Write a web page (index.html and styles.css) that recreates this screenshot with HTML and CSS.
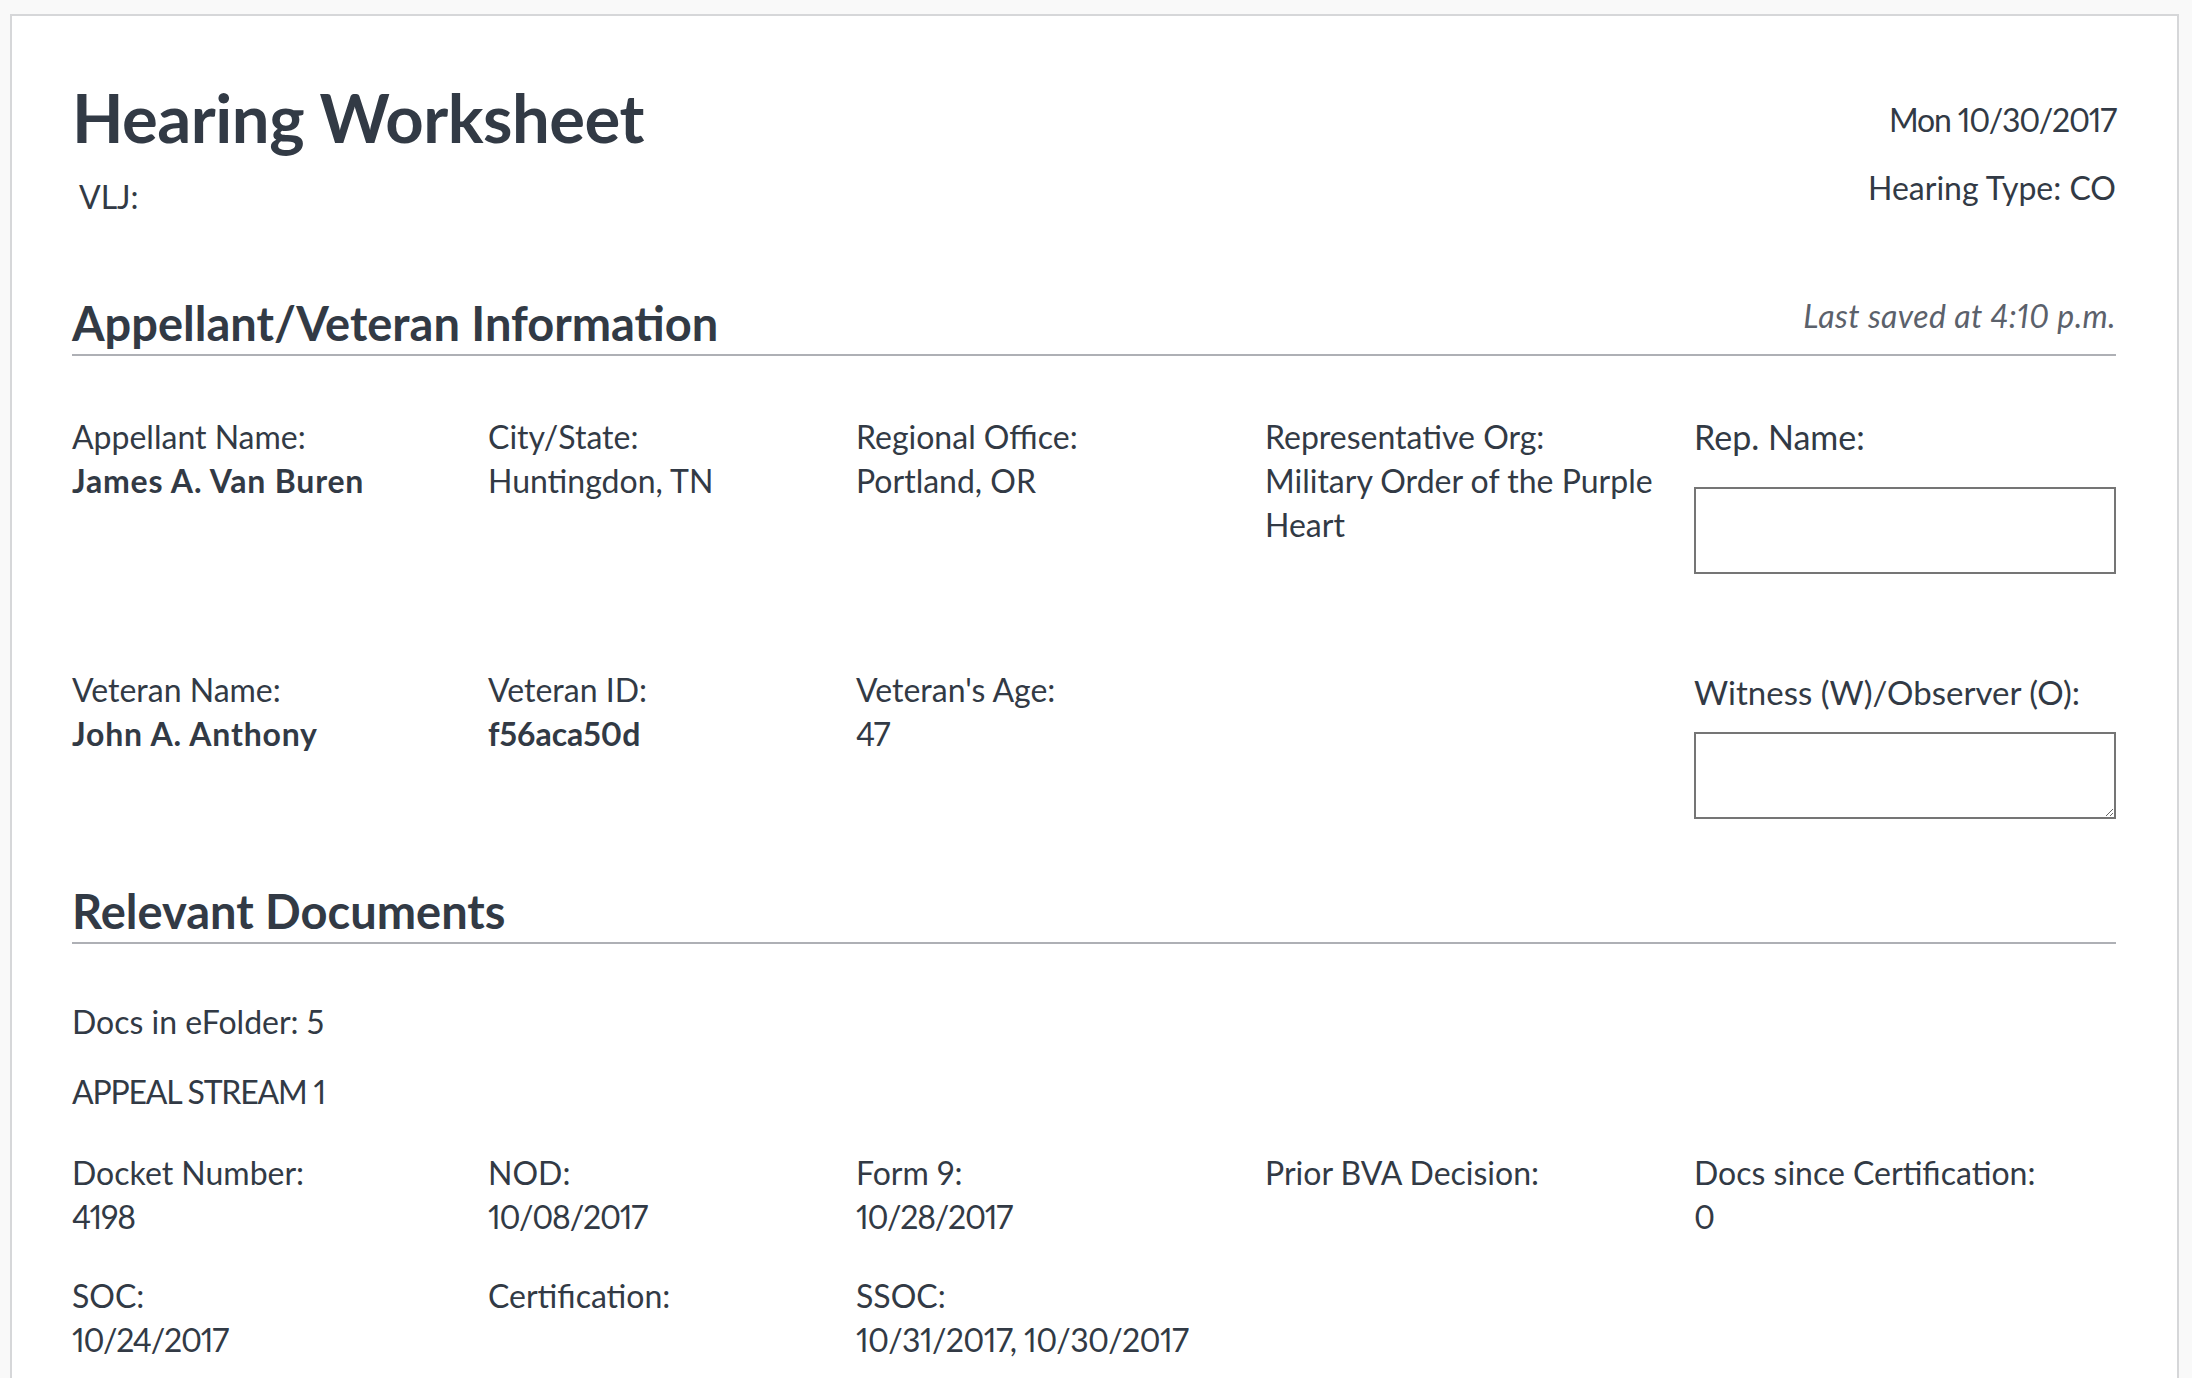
FILE: index.html
```html
<!DOCTYPE html>
<html lang="en">
<head>
<meta charset="utf-8">
<title>Hearing Worksheet</title>
<link rel="stylesheet" href="styles.css">
</head>
<body>
<div class="page">
  <main class="card">
    <header class="sheet-head">
      <div class="head-left">
        <h1 class="title">Hearing Worksheet</h1>
        <div class="vlj">VLJ:</div>
      </div>
      <div class="head-right">
        <div class="meta num">Mon 10/30/2017</div>
        <div class="meta meta-next">Hearing Type: CO</div>
      </div>
    </header>

    <section class="info">
      <div class="section-head">
        <h2 class="section-title">Appellant/Veteran Information</h2>
        <span class="saved">Last saved at 4:10 p.m.</span>
      </div>

      <div class="grid row-a">
        <div class="cell"><div class="line">Appellant Name:</div><div class="line strong">James A. Van Buren</div></div>
        <div class="cell"><div class="line">City/State:</div><div class="line">Huntingdon, TN</div></div>
        <div class="cell"><div class="line">Regional Office:</div><div class="line">Portland, OR</div></div>
        <div class="cell cell-wrap"><div class="line">Representative Org:</div><div class="line">Military Order of the Purple Heart</div></div>
        <div class="cell"><label class="field-label" for="rep">Rep. Name:</label><input class="field-input" id="rep" type="text"></div>
      </div>

      <div class="grid row-b">
        <div class="cell"><div class="line">Veteran Name:</div><div class="line strong">John A. Anthony</div></div>
        <div class="cell"><div class="line">Veteran ID:</div><div class="line strong id">f56aca50d</div></div>
        <div class="cell"><div class="line">Veteran's Age:</div><div class="line num">47</div></div>
        <div class="cell"></div>
        <div class="cell"><label class="field-label witness" for="wit">Witness (W)/Observer (O):</label><textarea class="field-area" id="wit"></textarea></div>
      </div>
    </section>

    <section class="docs">
      <div class="section-head">
        <h2 class="section-title">Relevant Documents</h2>
      </div>
      <div class="line docs-count">Docs in eFolder: 5</div>
      <div class="line stream">APPEAL STREAM 1</div>

      <div class="grid row-c">
        <div class="cell"><div class="line">Docket Number:</div><div class="line num">4198</div></div>
        <div class="cell"><div class="line">NOD:</div><div class="line num">10/08/2017</div></div>
        <div class="cell"><div class="line">Form 9:</div><div class="line num">10/28/2017</div></div>
        <div class="cell"><div class="line">Prior BVA Decision:</div></div>
        <div class="cell"><div class="line">Docs since Certification:</div><div class="line num">0</div></div>
      </div>

      <div class="grid row-d">
        <div class="cell"><div class="line">SOC:</div><div class="line num">10/24/2017</div></div>
        <div class="cell"><div class="line">Certification:</div></div>
        <div class="cell"><div class="line">SSOC:</div><div class="line num-list">10/31/2017, 10/30/2017</div></div>
        <div class="cell"></div>
        <div class="cell"></div>
      </div>
    </section>
  </main>
</div>
</body>
</html>
```

FILE: styles.css
```css
html, body {
  margin: 0;
  padding: 0;
  background: #f9f9f9;
  overflow: hidden;
}

body {
  font-family: Lato, "Open Sans", sans-serif;
  color: #323a45;
  font-size: 32px;
  line-height: 44px;
  font-variant-numeric: proportional-nums;
}

.page {
  padding: 14px 13px 0 10px;
}

.card {
  background: #ffffff;
  border: 2px solid #d6d7d9;
  border-bottom: none;
  padding: 68px 61px 120px 60px;
  min-height: 1420px;
  box-sizing: border-box;
}

/* header */
.sheet-head {
  display: flex;
  justify-content: space-between;
  align-items: flex-start;
}

.title {
  margin: 0;
  font-size: 67px;
  line-height: 66px;
  font-weight: 700;
  letter-spacing: -0.5px;
}

.vlj {
  margin: 25px 0 0 7px;
}

.head-right {
  margin-top: 14px;
  text-align: right;
}

.meta-next {
  margin-top: 24px;
}

.num {
  letter-spacing: -1.2px;
}

.num-list {
  letter-spacing: -0.6px;
}

/* section headers */
.section-head {
  display: flex;
  justify-content: space-between;
  align-items: flex-end;
  border-bottom: 2px solid #aeb0b5;
  padding-bottom: 6px;
}

.info .section-head {
  margin-top: 75px;
}

.docs .section-head {
  margin-top: 67px;
}

.section-title {
  margin: 0;
  font-size: 47px;
  line-height: 50px;
  font-weight: 700;
}

.saved {
  margin-bottom: 10px;
  font-style: italic;
  color: #5b616b;
  letter-spacing: 0.4px;
}

/* grids */
.grid {
  display: grid;
  grid-template-columns: 416px 368px 409px 429px 422px;
}

.cell-wrap {
  padding-right: 20px;
}

.row-a { margin-top: 59px; }
.row-b { margin-top: 94px; }
.row-c { margin-top: 37px; }
.row-d { margin-top: 35px; }

.strong {
  font-weight: 700;
  letter-spacing: 0.8px;
}

.strong.id {
  letter-spacing: 0;
}

.field-label {
  display: block;
  font-size: 34px;
  line-height: 44px;
}

.field-label.witness {
  font-size: 33px;
  padding-top: 2px;
}

.field-input,
.field-area {
  display: block;
  box-sizing: border-box;
  width: 100%;
  height: 87px;
  margin: 28px 0 0 0;
  border: 2px solid #757575;
  border-radius: 0;
  background: #ffffff;
  font-family: inherit;
  font-size: 32px;
  outline: none;
}

.field-area {
  margin-top: 18px;
  resize: vertical;
}

.docs-count {
  margin-top: 56px;
}

.stream {
  margin-top: 26px;
  letter-spacing: -1.2px;
}
```
